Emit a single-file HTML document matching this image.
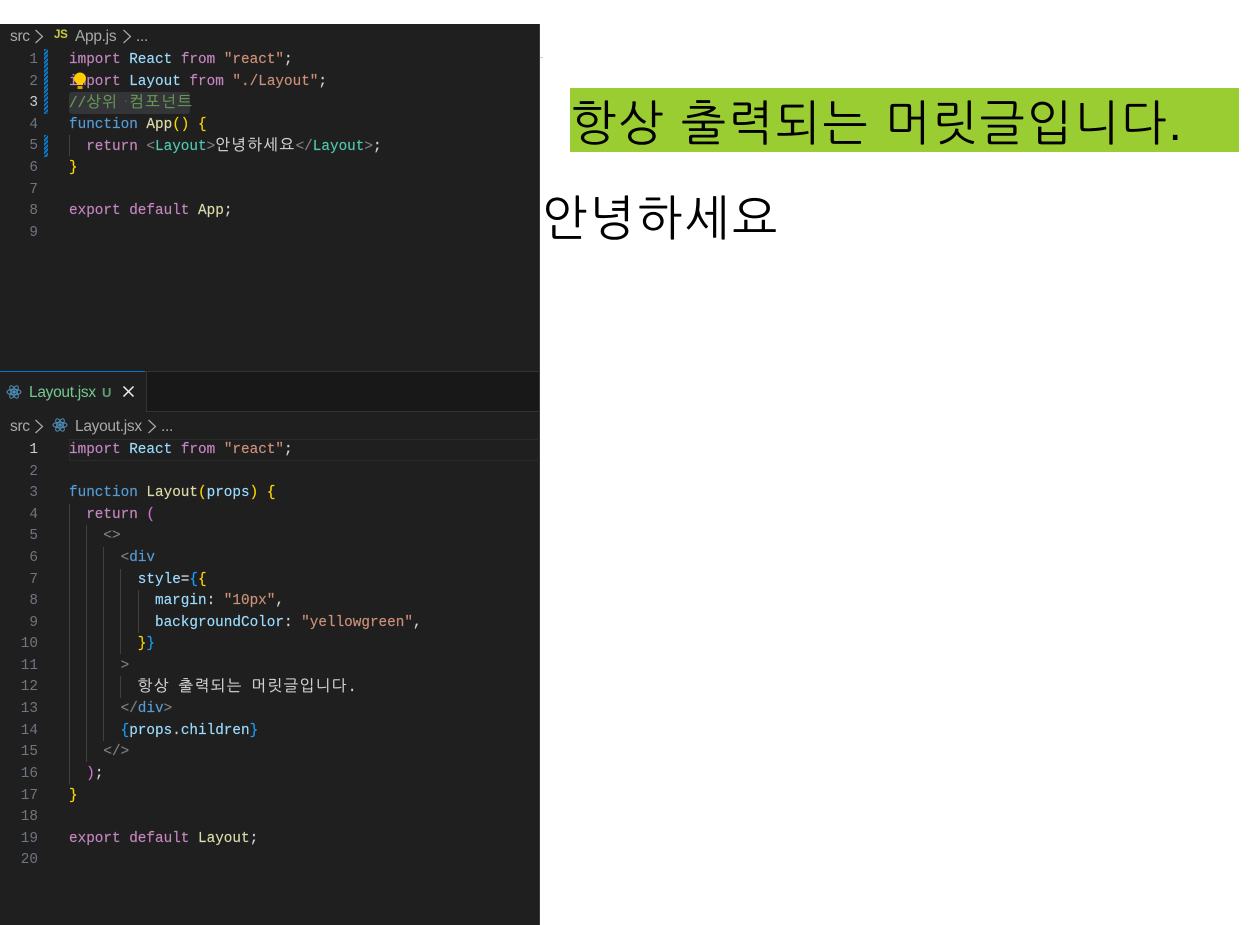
<!DOCTYPE html>
<html><head><meta charset="utf-8"><style>
html,body{margin:0;padding:0;background:#fff;width:1253px;height:925px;overflow:hidden}
.a{position:absolute}
.l{position:absolute;left:69px;margin-top:1px;white-space:pre;font:14.33px/22px "Liberation Mono",monospace;height:22px;color:#d4d4d4;-webkit-text-stroke:.15px}
.n{position:absolute;width:38px;margin-top:1px;text-align:right;left:0;font:14.33px/22px "Liberation Mono",monospace;color:#6e7681}
.n.c{color:#d0d0d0}
.k{font-family:"NanumGothic","Noto Sans CJK KR",sans-serif;font-size:15.5px;letter-spacing:1.5px;font-weight:normal}
.p{color:#c586c0}.b{color:#9cdcfe}.s{color:#ce9178}.f{color:#dcdcaa}.d{color:#569cd6}.t{color:#4ec9b0}.g{color:#808080}.y{color:#ffd700}.o{color:#da70d6}.e{color:#179fff}.w{color:#d4d4d4}.m{color:#6a9955}
.bc{position:absolute;font:15.5px/20px "Liberation Sans",sans-serif;letter-spacing:-.3px;color:#a9a9a9;white-space:pre;margin-top:1px}
.ig{position:absolute;width:1px;background:#404040}
.dirty{position:absolute;left:44px;width:4px;background:repeating-linear-gradient(135deg,#0a78c8 0 2px,#1f1f1f 2px 3px)}
</style></head><body>

<div class="a" style="left:0;top:24px;width:540px;height:901px;background:#1f1f1f"></div>
<div class="a" style="left:539px;top:24px;width:1px;height:901px;background:#3a3a3a"></div>
<div class="a" style="left:540px;top:57px;width:3px;height:1px;background:#ccc"></div>

<!-- top breadcrumb -->
<div class="bc" style="left:10px;top:26px">src</div>
<svg class="a" style="left:34px;top:29px" width="10" height="15"><path d="M1.500 1 L8.500 7.500 L1.500 14" fill="none" stroke="#a9a9a9" stroke-width="1.200"/></svg>
<div class="a" style="left:54px;top:28px;font:bold 11.500px/14px 'Liberation Sans',sans-serif;color:#cbcb41;letter-spacing:-.3px">JS</div>
<div class="bc" style="left:75px;top:26px">App.js</div>
<svg class="a" style="left:122px;top:29px" width="10" height="15"><path d="M1.500 1 L8.500 7.500 L1.500 14" fill="none" stroke="#a9a9a9" stroke-width="1.200"/></svg>
<div class="bc" style="left:136px;top:26px">...</div>

<!-- gutter pane 1 -->
<div class="n" style="top:48px">1</div><div class="n" style="top:70px">2</div><div class="n c" style="top:91px">3</div><div class="n" style="top:113px">4</div><div class="n" style="top:134px">5</div><div class="n" style="top:156px">6</div><div class="n" style="top:178px">7</div><div class="n" style="top:199px">8</div><div class="n" style="top:221px">9</div>
<div class="dirty" style="top:49px;height:65px"></div>
<div class="dirty" style="top:135px;height:22px"></div>
<div class="ig" style="left:69px;top:135px;height:21px"></div>

<div class="a" style="left:69px;top:92px;width:121px;height:22px;background:#333538;border-radius:3px"></div>

<div class="l" style="top:48px"><span class="p">import</span> <span class="b">React</span> <span class="p">from</span> <span class="s">"react"</span>;</div>
<div class="l" style="top:70px"><span class="p">import</span> <span class="b">Layout</span> <span class="p">from</span> <span class="s">"./Layout"</span>;</div>
<div class="l" style="top:91px"><span class="m">//</span><span class="m k">상위</span><span class="m k" style="letter-spacing:1px;color:#555"> ·</span><span class="m k">컴포넌트</span></div>
<div class="l" style="top:113px"><span class="d">function</span> <span class="f">App</span><span class="y">()</span> <span class="y">{</span></div>
<div class="l" style="top:134px">  <span class="p">return</span> <span class="g">&lt;</span><span class="t">Layout</span><span class="g">&gt;</span><span class="k">안녕하세요</span><span class="g">&lt;/</span><span class="t">Layout</span><span class="g">&gt;</span>;</div>
<div class="l" style="top:156px"><span class="y">}</span></div>
<div class="l" style="top:199px"><span class="p">export</span> <span class="p">default</span> <span class="f">App</span>;</div>

<!-- bulb -->
<svg class="a" style="left:71px;top:71px" width="18" height="20"><path d="M9 1.500a6 6 0 0 1 6 6c0 2.200-1 3.300-2.200 4.400-.6.600-.8 1.200-.8 2.100H6c0-.9-.2-1.500-.8-2.100C4 10.800 3 9.700 3 7.500a6 6 0 0 1 6-6z" fill="#ffcc00"/><rect x="6.500" y="15" width="5" height="3" fill="#d9a300"/></svg>

<!-- tab bar -->
<div class="a" style="left:0;top:371px;width:540px;height:1px;background:#333"></div>
<div class="a" style="left:146px;top:372px;width:393px;height:40px;background:#181818"></div>
<div class="a" style="left:146px;top:411px;width:393px;height:1px;background:#333"></div>
<div class="a" style="left:146px;top:372px;width:1px;height:40px;background:#333"></div>
<div class="a" style="left:0;top:371px;width:145px;height:1px;background:#0078d4"></div>
<svg class="a" style="left:6px;top:384px" width="16" height="16" viewBox="0 0 16 16" fill="none" stroke="#4d8fb8" stroke-width="1"><ellipse cx="8" cy="8" rx="7" ry="2.800"/><ellipse cx="8" cy="8" rx="7" ry="2.800" transform="rotate(60 8 8)"/><ellipse cx="8" cy="8" rx="7" ry="2.800" transform="rotate(120 8 8)"/><circle cx="8" cy="8" r="1.300" fill="#4d8fb8"/></svg>
<div class="bc" style="left:29px;top:382px;color:#73c991">Layout.jsx</div>
<div class="a" style="left:102px;top:385px;font:bold 13px/16px 'Liberation Sans',sans-serif;color:#5f9e74">U</div>
<svg class="a" style="left:122px;top:385px" width="13" height="13"><path d="M1.500 1.500 L11.500 11.500 M11.500 1.500 L1.500 11.500" stroke="#f0f0f0" stroke-width="1.500"/></svg>

<!-- breadcrumb 2 -->
<div class="bc" style="left:10px;top:416px">src</div>
<svg class="a" style="left:34px;top:419px" width="10" height="15"><path d="M1.500 1 L8.500 7.500 L1.500 14" fill="none" stroke="#a9a9a9" stroke-width="1.200"/></svg>
<svg class="a" style="left:52px;top:417px" width="16" height="16" viewBox="0 0 16 16" fill="none" stroke="#4d8fb8" stroke-width="1"><ellipse cx="8" cy="8" rx="7" ry="2.800"/><ellipse cx="8" cy="8" rx="7" ry="2.800" transform="rotate(60 8 8)"/><ellipse cx="8" cy="8" rx="7" ry="2.800" transform="rotate(120 8 8)"/><circle cx="8" cy="8" r="1.300" fill="#4d8fb8"/></svg>
<div class="bc" style="left:75px;top:416px">Layout.jsx</div>
<svg class="a" style="left:147px;top:419px" width="10" height="15"><path d="M1.500 1 L8.500 7.500 L1.500 14" fill="none" stroke="#a9a9a9" stroke-width="1.200"/></svg>
<div class="bc" style="left:161px;top:416px">...</div>

<!-- current line -->
<div class="a" style="left:69px;top:439px;width:470px;height:20px;border:1px solid #2b2b2b;border-right:0"></div>

<!-- gutter pane 2 -->
<div class="n c" style="top:438px">1</div><div class="n" style="top:460px">2</div><div class="n" style="top:481px">3</div><div class="n" style="top:503px">4</div><div class="n" style="top:524px">5</div><div class="n" style="top:546px">6</div><div class="n" style="top:568px">7</div><div class="n" style="top:589px">8</div><div class="n" style="top:611px">9</div><div class="n" style="top:632px">10</div><div class="n" style="top:654px">11</div><div class="n" style="top:675px">12</div><div class="n" style="top:697px">13</div><div class="n" style="top:719px">14</div><div class="n" style="top:740px">15</div><div class="n" style="top:762px">16</div><div class="n" style="top:784px">17</div><div class="n" style="top:805px">18</div><div class="n" style="top:827px">19</div><div class="n" style="top:848px">20</div>

<!-- indent guides -->
<div class="ig" style="left:69px;top:504px;height:280px"></div>
<div class="ig" style="left:86px;top:525px;height:237px"></div>
<div class="ig" style="left:103px;top:547px;height:194px"></div>
<div class="ig" style="left:120px;top:569px;height:85px"></div>
<div class="ig" style="left:120px;top:676px;height:22px"></div>
<div class="ig" style="left:138px;top:590px;height:43px"></div>

<div class="l" style="top:438px"><span class="p">import</span> <span class="b">React</span> <span class="p">from</span> <span class="s">"react"</span>;</div>
<div class="l" style="top:481px"><span class="d">function</span> <span class="f">Layout</span><span class="y">(</span><span class="b">props</span><span class="y">)</span> <span class="y">{</span></div>
<div class="l" style="top:503px">  <span class="p">return</span> <span class="o">(</span></div>
<div class="l" style="top:524px">    <span class="g">&lt;&gt;</span></div>
<div class="l" style="top:546px">      <span class="g">&lt;</span><span class="d">div</span></div>
<div class="l" style="top:568px">        <span class="b">style</span>=<span class="e">{</span><span class="y">{</span></div>
<div class="l" style="top:589px">          <span class="b">margin</span>: <span class="s">"10px"</span>,</div>
<div class="l" style="top:611px">          <span class="b">backgroundColor</span>: <span class="s">"yellowgreen"</span>,</div>
<div class="l" style="top:632px">        <span class="y">}</span><span class="e">}</span></div>
<div class="l" style="top:654px">      <span class="g">&gt;</span></div>
<div class="l" style="top:675px">        <span class="k">항상</span> <span class="k">출력되는</span> <span class="k">머릿글입니다</span>.</div>
<div class="l" style="top:697px">      <span class="g">&lt;/</span><span class="d">div</span><span class="g">&gt;</span></div>
<div class="l" style="top:719px">      <span class="e">{</span><span class="b">props</span>.<span class="b">children</span><span class="e">}</span></div>
<div class="l" style="top:740px">    <span class="g">&lt;/&gt;</span></div>
<div class="l" style="top:762px">  <span class="o">)</span>;</div>
<div class="l" style="top:784px"><span class="y">}</span></div>
<div class="l" style="top:827px"><span class="p">export</span> <span class="p">default</span> <span class="f">Layout</span>;</div>

<!-- right side -->
<div class="a" style="left:570px;top:88px;width:669px;height:64px;background:#9acd32"></div>
<div class="a" style="left:571px;top:93px;font:48px/64px 'Liberation Sans','NanumGothic','Noto Sans CJK KR',sans-serif;color:#000;white-space:pre;letter-spacing:2.100px">항상 출력되는 머릿글입니다.</div>
<div class="a" style="left:542px;top:188px;font:48px/64px 'Liberation Sans','NanumGothic','Noto Sans CJK KR',sans-serif;color:#000;white-space:pre;letter-spacing:2.400px">안녕하세요</div>
</body></html>
